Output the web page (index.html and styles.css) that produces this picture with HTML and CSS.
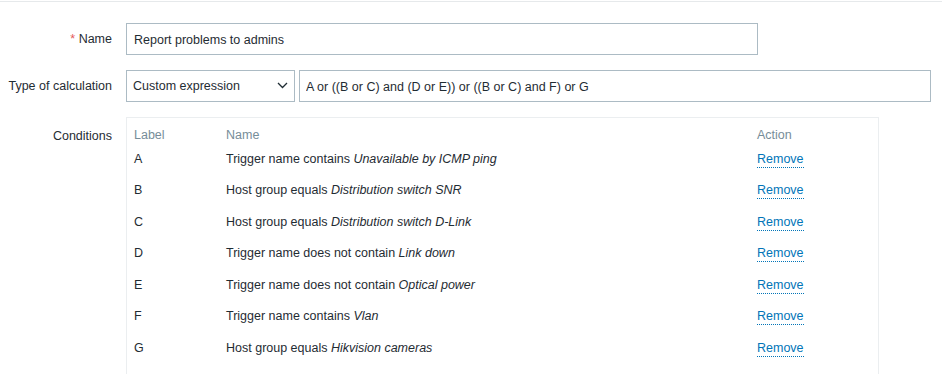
FILE: index.html
```html
<!DOCTYPE html>
<html lang="en">
  <head>
    <meta charset="UTF-8" />
    <meta name="viewport" content="width=device-width, initial-scale=1.0" />
    <title>Action</title>
    <link rel="stylesheet" href="styles.css">
  </head>
  <body>
    <div class="topline"></div>

    <form class="action-form">
      <label class="form-label" for="name"><span class="required">*</span> Name</label>
      <div class="form-field">
        <input type="text" id="name" class="text-input wide" value="Report problems to admins" />
      </div>

      <label class="form-label" for="evaltype">Type of calculation</label>
      <div class="form-field calc-row">
        <div class="select-wrap">
          <select id="evaltype">
            <option>Custom expression</option>
            <option>And/Or</option>
            <option>And</option>
            <option>Or</option>
          </select>
          <svg class="chevron" width="11" height="7" viewBox="0 0 11 7">
            <path d="M1 1 L5.5 5.5 L10 1" fill="none" stroke="#1f2c33" stroke-width="1.3" />
          </svg>
        </div>
        <input type="text" class="text-input expr" value="A or ((B or C) and (D or E)) or ((B or C) and F) or G" />
      </div>

      <label class="form-label conditions-label">Conditions</label>
      <div class="form-field">
        <div class="conditions">
          <div class="cond-head">Label</div>
          <div class="cond-head">Name</div>
          <div class="cond-head">Action</div>

          <div class="cond-cell">A</div>
          <div class="cond-cell">Trigger name contains <em>Unavailable by ICMP ping</em></div>
          <div class="cond-cell"><a href="#" class="link-action">Remove</a></div>

          <div class="cond-cell">B</div>
          <div class="cond-cell">Host group equals <em>Distribution switch SNR</em></div>
          <div class="cond-cell"><a href="#" class="link-action">Remove</a></div>

          <div class="cond-cell">C</div>
          <div class="cond-cell">Host group equals <em>Distribution switch D-Link</em></div>
          <div class="cond-cell"><a href="#" class="link-action">Remove</a></div>

          <div class="cond-cell">D</div>
          <div class="cond-cell">Trigger name does not contain <em>Link down</em></div>
          <div class="cond-cell"><a href="#" class="link-action">Remove</a></div>

          <div class="cond-cell">E</div>
          <div class="cond-cell">Trigger name does not contain <em>Optical power</em></div>
          <div class="cond-cell"><a href="#" class="link-action">Remove</a></div>

          <div class="cond-cell">F</div>
          <div class="cond-cell">Trigger name contains <em>Vlan</em></div>
          <div class="cond-cell"><a href="#" class="link-action">Remove</a></div>

          <div class="cond-cell">G</div>
          <div class="cond-cell">Host group equals <em>Hikvision cameras</em></div>
          <div class="cond-cell"><a href="#" class="link-action">Remove</a></div>
        </div>
      </div>
    </form>
  </body>
</html>
```

FILE: styles.css
```css
html,
body {
  height: 100%;
  overflow: hidden;
}
body {
  margin: 0;
  background: #fff;
  color: #1f2c33;
  font-family: "Liberation Sans", Arial, sans-serif;
  font-size: 12.5px;
  line-height: 15px;
}
.topline {
  height: 1px;
  border-bottom: 1px solid #e6e9eb;
}
.action-form {
  display: grid;
  grid-template-columns: 104px 1fr;
  column-gap: 14px;
  row-gap: 15px;
  padding: 21px 0 0 8px;
}
.form-label {
  text-align: right;
  align-self: center;
  white-space: nowrap;
  padding-top: 1px;
}
.required {
  color: #e45959;
}
.conditions-label {
  align-self: start;
  padding-top: 12px;
}
.form-field {
  display: flex;
}
.calc-row {
  gap: 4px;
}
.text-input,
select {
  height: 32px;
  box-sizing: border-box;
  border: 1px solid #acbbc4;
  border-radius: 0;
  background: #fff;
  color: #1f2c33;
  font: inherit;
  margin: 0;
  outline: none;
}
.text-input {
  padding: 1px 6px 0;
}
.wide {
  width: 632px;
  padding-left: 7px;
}
.expr {
  width: 632px;
}
/* select with drawn chevron */
.select-wrap {
  position: relative;
  width: 169px;
}
.select-wrap select {
  appearance: none;
  -webkit-appearance: none;
  width: 100%;
  padding: 1px 24px 0 6px;
}
.chevron {
  position: absolute;
  right: 7px;
  top: 12px;
  pointer-events: none;
}
.conditions {
  width: 753px;
  box-sizing: border-box;
  border: 1px solid #ebeef0;
  border-bottom: none;
  padding: 10px 7px 20px;
  display: grid;
  grid-template-columns: 92px 531px 1fr;
  grid-auto-rows: 31.5px;
  grid-template-rows: 23.5px;
}
.cond-head {
  color: #768d99;
}
.cond-cell {
  white-space: nowrap;
}
.cond-cell em {
  font-style: italic;
}
.link-action {
  color: #0275b8;
  text-decoration: none;
  border-bottom: 1px dotted #0275b8;
  padding-bottom: 1px;
}
```
